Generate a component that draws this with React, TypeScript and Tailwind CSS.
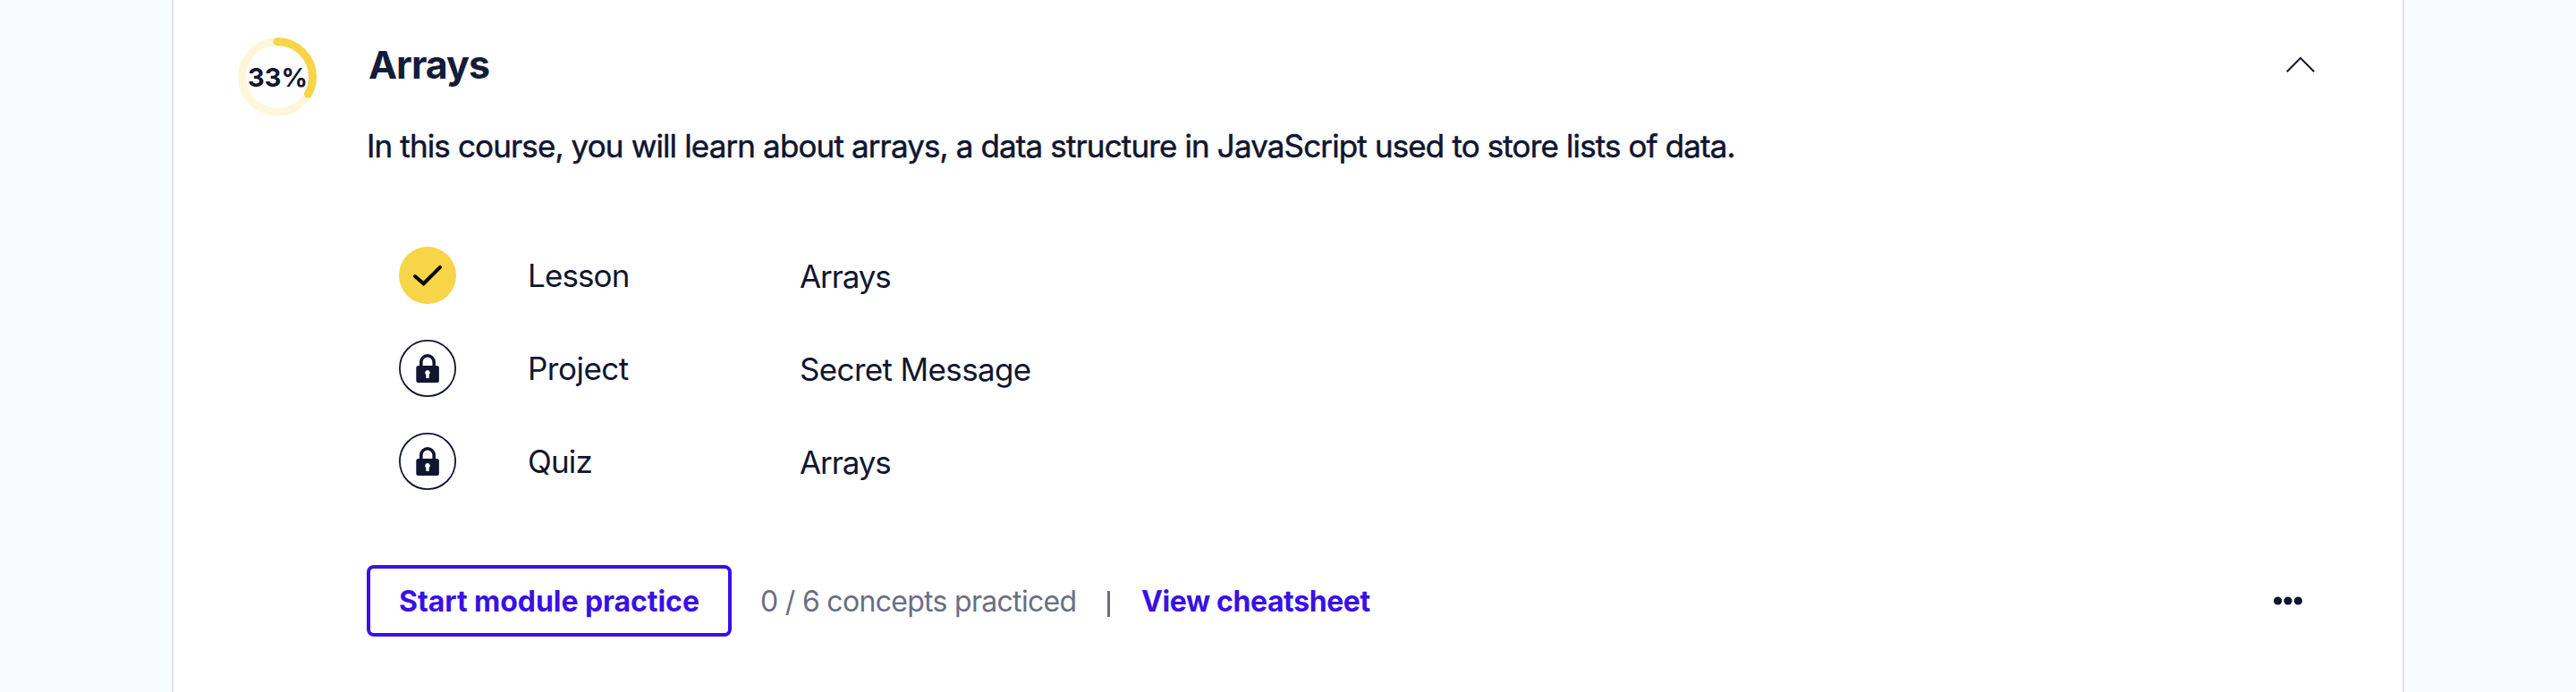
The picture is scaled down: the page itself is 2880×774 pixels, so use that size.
type Item = { kind: string; title: string; done: boolean; kindClass: string; titleClass: string };

const items: Item[] = [
  { kind: "Lesson", title: "Arrays", done: true, kindClass: "tracking-[-0.9px]", titleClass: "tracking-[-1.1px]" },
  { kind: "Project", title: "Secret Message", done: false, kindClass: "tracking-[-0.5px]", titleClass: "tracking-[-0.65px]" },
  { kind: "Quiz", title: "Arrays", done: false, kindClass: "tracking-[-0.8px]", titleClass: "tracking-[-1.1px]" },
];

function ProgressRing({ percent }: { percent: number }) {
  const length = 2 * Math.PI * 39.5;
  return (
    <div className="grid h-[88px] w-[88px] shrink-0 place-items-center">
      <svg viewBox="0 0 88 88" className="col-start-1 row-start-1 h-[88px] w-[88px] -rotate-90" fill="none" strokeWidth="9">
        <circle cx="44" cy="44" r="39.5" stroke="#fff6db" />
        <circle
          cx="44"
          cy="44"
          r="39.5"
          stroke="#f8d448"
          strokeLinecap="round"
          strokeDasharray={`${(length * percent) / 100} ${length}`}
        />
      </svg>
      <span className="col-start-1 row-start-1 pt-px pl-px text-[29px] leading-[34px] font-bold">
        {percent}%
      </span>
    </div>
  );
}

function CheckBadge() {
  return (
    <svg viewBox="0 0 64 64" className="h-16 w-16" fill="none">
      <circle cx="32" cy="32" r="32" fill="#f8d448" />
      <path d="M18 33 27.6 41.2 46 22.8" stroke="#000" strokeWidth="4" strokeLinecap="round" />
    </svg>
  );
}

function LockBadge() {
  return (
    <svg viewBox="0 0 64 64" className="h-16 w-16" fill="none">
      <circle cx="32" cy="32" r="31.1" stroke="#10162f" strokeWidth="1.8" />
      <path d="M24.8 30v-5a7.2 7.2 0 0 1 14.4 0v5" stroke="#10162f" strokeWidth="3.6" />
      <rect x="19.3" y="29" width="25.6" height="19" rx="2.5" fill="#10162f" />
      <path d="M32 34a2.9 2.9 0 0 1 1.8 5.1l-.2 3.9h-3.2l-.2-3.9A2.9 2.9 0 0 1 32 34Z" fill="#fff" />
    </svg>
  );
}

export default function App() {
  return (
    <div className="h-[774px] bg-[#f6fcff] px-48 font-['Inter','Liberation_Sans',sans-serif] text-[#10162f]">
      <section className="flex h-full border-x-2 border-[#e0e1e4] bg-white pt-[42px] pr-[98px] pl-[72px]">
        <ProgressRing percent={33} />
        <div className="ml-14 flex-1">
          <header className="flex items-center justify-between pt-2">
            <h2 className="pl-[2px] text-[43px] leading-[44px] font-bold tracking-[-1px] text-[#151c3a]">Arrays</h2>
            <svg viewBox="0 0 32 18" className="h-[18px] w-8" fill="none">
              <path d="M.8 17.2 16 1.9 31.2 17.2" stroke="#10162f" strokeWidth="2" />
            </svg>
          </header>
          <p className="mt-[47px] text-[35px] leading-[44px] tracking-[-0.87px] whitespace-nowrap [-webkit-text-stroke:0.5px_#10162f]">
            In this course, you will learn about arrays, a data structure in JavaScript used to store lists of data.
          </p>
          <ul className="mt-[91px] flex flex-col gap-10 pl-9">
            {items.map((item) => (
              <li key={item.kind} className="flex h-16 items-center text-[35px] leading-[44px]">
                {item.done ? <CheckBadge /> : <LockBadge />}
                <span className={`ml-20 w-[304px] ${item.kindClass}`}>{item.kind}</span>
                <span className={`pt-[2px] ${item.titleClass}`}>{item.title}</span>
              </li>
            ))}
          </ul>
          <footer className="mt-[84px] flex h-20 items-center text-[32px] leading-[40px]">
            <button className="h-20 w-[408px] rounded-lg border-4 border-[#3a10e5] pt-px font-bold tracking-[-0.06px] whitespace-nowrap text-[#3a10e5]">
              Start module practice
            </button>
            <span className="ml-8 w-[388px] pt-px tracking-[-0.7px] whitespace-nowrap text-[#6a6e7f]">
              0 / 6 concepts practiced
            </span>
            <span className="mt-[6px] h-[29px] w-[3px] bg-[#6a6e7f]" />
            <a className="ml-[35px] pt-px font-bold tracking-[-0.4px] whitespace-nowrap text-[#3a10e5]">View cheatsheet</a>
            <svg viewBox="0 0 32 10" className="mr-[14px] ml-auto h-[10px] w-8" fill="#10162f">
              <circle cx="4.6" cy="5" r="4.6" />
              <circle cx="16" cy="5" r="4.6" />
              <circle cx="27.4" cy="5" r="4.6" />
            </svg>
          </footer>
        </div>
      </section>
    </div>
  );
}
